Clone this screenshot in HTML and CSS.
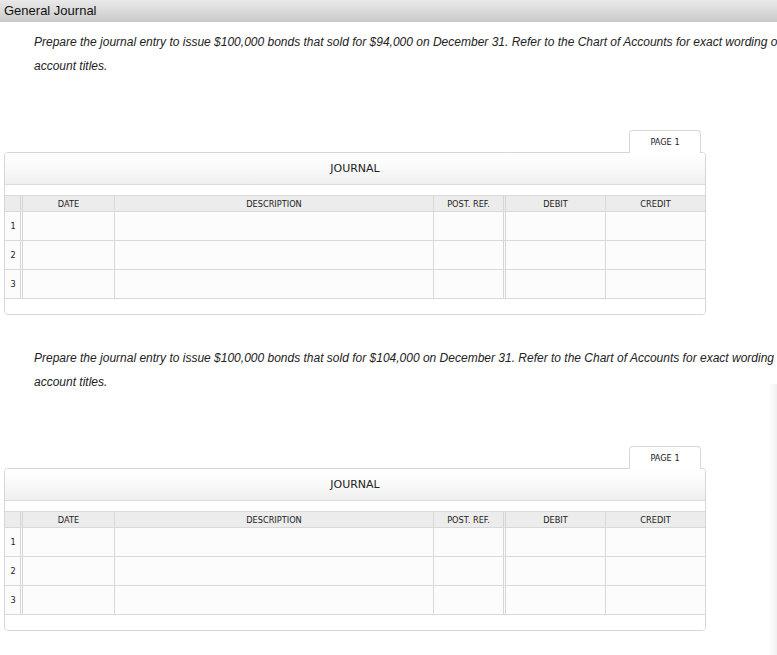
FILE: index.html
```html
<!DOCTYPE html>
<html>
<head>
<meta charset="utf-8">
<link rel="stylesheet" href="styles.css">
</head>
<body>
<div class="titlebar">General Journal</div>

<section class="part">
  <p class="prompt">Prepare the journal entry to issue $100,000 bonds that sold for $94,000 on December 31. Refer to the Chart of Accounts for exact wording of account titles.</p>
  <div class="journal">
    <div class="tab">PAGE 1</div>
    <div class="box">
      <div class="box-title">JOURNAL</div>
      <div class="strip"></div>
      <div class="row head">
        <div class="c num"></div>
        <div class="c date">DATE</div>
        <div class="c desc">DESCRIPTION</div>
        <div class="c post">POST. REF.</div>
        <div class="c debit">DEBIT</div>
        <div class="c credit">CREDIT</div>
      </div>
      <div class="row"><div class="c num">1</div><div class="c date"></div><div class="c desc"></div><div class="c post"></div><div class="c debit"></div><div class="c credit"></div></div>
      <div class="row"><div class="c num">2</div><div class="c date"></div><div class="c desc"></div><div class="c post"></div><div class="c debit"></div><div class="c credit"></div></div>
      <div class="row"><div class="c num">3</div><div class="c date"></div><div class="c desc"></div><div class="c post"></div><div class="c debit"></div><div class="c credit"></div></div>
      <div class="foot"></div>
    </div>
  </div>
</section>

<section class="part second">
  <p class="prompt">Prepare the journal entry to issue $100,000 bonds that sold for $104,000 on December 31. Refer to the Chart of Accounts for exact wording of account titles.</p>
  <div class="journal">
    <div class="tab">PAGE 1</div>
    <div class="box">
      <div class="box-title">JOURNAL</div>
      <div class="strip"></div>
      <div class="row head">
        <div class="c num"></div>
        <div class="c date">DATE</div>
        <div class="c desc">DESCRIPTION</div>
        <div class="c post">POST. REF.</div>
        <div class="c debit">DEBIT</div>
        <div class="c credit">CREDIT</div>
      </div>
      <div class="row"><div class="c num">1</div><div class="c date"></div><div class="c desc"></div><div class="c post"></div><div class="c debit"></div><div class="c credit"></div></div>
      <div class="row"><div class="c num">2</div><div class="c date"></div><div class="c desc"></div><div class="c post"></div><div class="c debit"></div><div class="c credit"></div></div>
      <div class="row"><div class="c num">3</div><div class="c date"></div><div class="c desc"></div><div class="c post"></div><div class="c debit"></div><div class="c credit"></div></div>
      <div class="foot"></div>
    </div>
  </div>
</section>

<div class="edge-shadow"></div>
</body>
</html>
```

FILE: styles.css
```css
html, body {
  margin: 0;
  padding: 0;
  overflow: hidden;
  background: #ffffff;
}
body {
  position: relative;
  width: 777px;
  height: 655px;
  font-family: "Liberation Sans", Arial, sans-serif;
  color: #222;
}
.titlebar {
  height: 22px;
  line-height: 22px;
  padding-left: 4px;
  font-size: 13px;
  color: #111;
  background: linear-gradient(to bottom, #e9e9e9 0%, #dadada 50%, #c9c9c9 100%);
}
.part {
  display: flex;
  flex-direction: column;
}
.prompt {
  margin: 8px 0 0 34px;
  width: 770px;
  font-size: 12px;
  font-style: italic;
  line-height: 24px;
  color: #222;
}
.second .prompt {
  margin-top: 31px;
}
.journal {
  margin: 52px 0 0 4px;
  width: 702px;
  display: flex;
  flex-direction: column;
  font-family: "DejaVu Sans", Verdana, sans-serif;
}
.tab {
  position: relative;
  z-index: 1;
  align-self: flex-end;
  margin-right: 5px;
  margin-bottom: -1px;
  box-sizing: border-box;
  width: 72px;
  height: 23px;
  border: 1px solid #d8d8d8;
  border-bottom: none;
  border-radius: 4px 4px 0 0;
  background: #ffffff;
  font-size: 8.2px;
  color: #222;
  text-align: center;
  line-height: 22px;
}
.box {
  border: 1px solid #d6d6d6;
  border-radius: 4px;
  background: #ffffff;
  overflow: hidden;
}
.box-title {
  height: 31px;
  line-height: 31px;
  border-bottom: 1px solid #dcdcdc;
  background: linear-gradient(to bottom, #ffffff 0%, #f9f9f9 50%, #efefef 100%);
  text-align: center;
  font-size: 11px;
  color: #222;
}
.strip {
  height: 10px;
  border-bottom: 1px solid #dadada;
  background: #ffffff;
}
.row {
  display: grid;
  grid-template-columns: 18px 92px 319px 72px 100px 99px;
  height: 29px;
  box-sizing: border-box;
  border-bottom: 1px solid #d9d9d9;
  background: #fcfcfc;
}
.row.head {
  height: 16px;
  background: #ececec;
}
.c {
  box-sizing: border-box;
  border-right: 1px solid #d9d9d9;
  display: flex;
  align-items: center;
  justify-content: center;
  font-size: 8.2px;
  color: #222;
}
.c.num {
  border-right: 3px double #d6d6d6;
  padding-left: 1px;
}
.c.post {
  border-right: 3px double #d6d6d6;
}
.c.credit {
  border-right: none;
}
.foot {
  height: 15px;
  background: #ffffff;
}
.edge-shadow {
  position: absolute;
  right: 0;
  top: 384px;
  bottom: 0;
  width: 9px;
  background: linear-gradient(to right, rgba(0,0,0,0) 0%, rgba(0,0,0,0.035) 60%, rgba(0,0,0,0.06) 100%);
}
```
